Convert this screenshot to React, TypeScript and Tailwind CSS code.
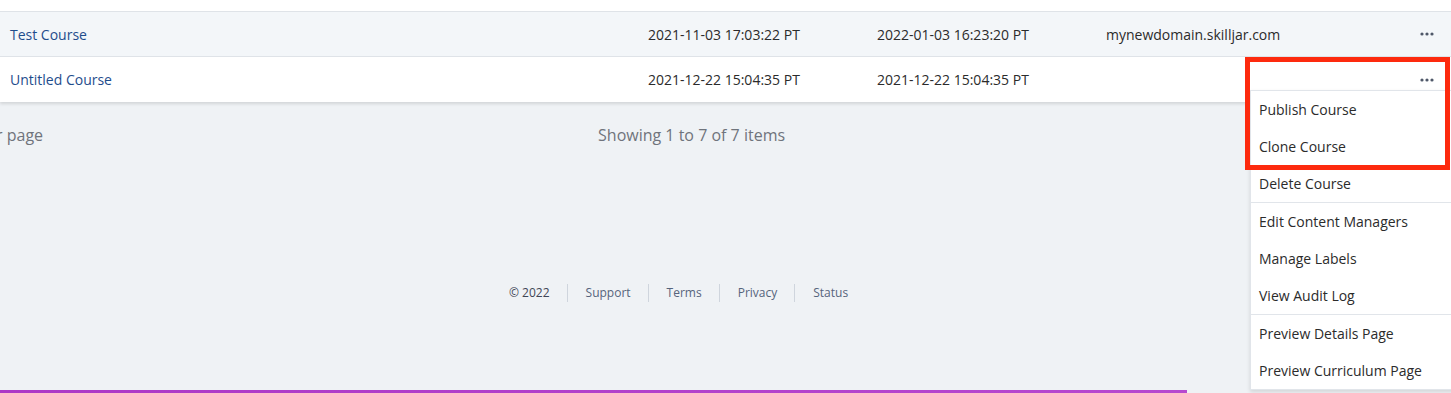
import React from 'react';

const Dots: React.FC = () => (
  <svg width="14" height="4" viewBox="0 0 14 4" className="text-[#4f5869]">
    <circle cx="2" cy="2" r="1.6" fill="currentColor" />
    <circle cx="7" cy="2" r="1.6" fill="currentColor" />
    <circle cx="12" cy="2" r="1.6" fill="currentColor" />
  </svg>
);

const rows = [
  { name: 'Test Course', created: '2021-11-03 17:03:22 PT', updated: '2022-01-03 16:23:20 PT', domain: 'mynewdomain.skilljar.com', bg: 'bg-[#f3f6f9]' },
  { name: 'Untitled Course', created: '2021-12-22 15:04:35 PT', updated: '2021-12-22 15:04:35 PT', domain: '', bg: 'bg-white' },
];

const menuGroups = [
  ['Publish Course', 'Clone Course', 'Delete Course'],
  ['Edit Content Managers', 'Manage Labels', 'View Audit Log'],
  ['Preview Details Page', 'Preview Curriculum Page'],
];

const App: React.FC = () => {
  return (
    <div className="relative w-[1451px] h-[393px] overflow-hidden bg-[#eff2f5] font-['Open_Sans',sans-serif]">
      {/* Table */}
      <div className="bg-white shadow-[0_2px_3px_rgba(0,0,0,0.12)]">
        <div className="h-[12px] border-b border-[#dfe3e8]" />
        {rows.map((r, i) => (
          <div
            key={r.name}
            className={`grid grid-cols-[638px_229px_229px_1fr_50px] items-center pl-[10px] h-[45px] text-[14px] ${r.bg} ${i === 0 ? 'border-b border-[#dfe3e8]' : ''}`}
          >
            <span className="text-[#1f4d8c]">{r.name}</span>
            <span className="text-[#2b2b2b]">{r.created}</span>
            <span className="text-[#2b2b2b]">{r.updated}</span>
            <span className="text-[#2b2b2b]">{r.domain}</span>
            <span className="flex justify-end pr-[17px]"><Dots /></span>
          </div>
        ))}
      </div>

      {/* Pagination */}
      <div className="flex items-center h-[65px] text-[16px] text-[#6f747c]">
        <span className="-ml-[4px]">r page</span>
        <span className="ml-[555px]">Showing 1 to 7 of 7 items</span>
      </div>

      {/* Footer */}
      <div className="flex items-center mt-[117px] ml-[509px] text-[12px] text-[#56647c]">
        <span className="text-[#3f4656]">© 2022</span>
        {['Support', 'Terms', 'Privacy', 'Status'].map((l) => (
          <React.Fragment key={l}>
            <span className="ml-[17px] mr-[18px] h-[18px] w-px bg-[#cfd5dd]" />
            <span>{l}</span>
          </React.Fragment>
        ))}
      </div>

      {/* Progress bar */}
      <div className="absolute left-0 bottom-0 h-[3px] w-[1187px] bg-gradient-to-r from-[#ad38c6] to-[#b748cf]" />

      {/* Dropdown menu */}
      <div className="absolute left-[1250px] top-[90px] w-[205px] bg-white border border-[#e1e5ea] shadow-[0_2px_4px_rgba(0,0,0,0.12)] text-[14px] text-[#2b2b2b]">
        {menuGroups.map((g, gi) => (
          <div key={gi} className={gi > 0 ? 'border-t border-[#e1e5ea]' : ''}>
            {g.map((item) => (
              <div key={item} className="h-[37px] flex items-center px-[8px]">
                {item}
              </div>
            ))}
          </div>
        ))}
      </div>

      {/* Highlight annotation */}
      <div className="absolute left-[1245px] top-[57px] w-[205px] h-[113px] border-[5px] border-[#fd2a0e]" />
    </div>
  );
};

export default App;
